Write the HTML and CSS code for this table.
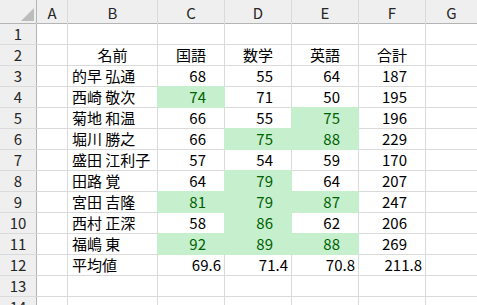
FILE: index.html
```html
<!DOCTYPE html>
<html lang="ja">
<head>
<meta charset="utf-8">
<title>Sheet</title>
<link rel="stylesheet" href="styles.css">
</head>
<body>
<div class="sheet">
  <div class="corner"><span class="tri"></span></div>
  <div class="ch">A</div><div class="ch">B</div><div class="ch">C</div><div class="ch">D</div><div class="ch">E</div><div class="ch">F</div><div class="ch">G</div>

  <div class="rh">1</div><div class="c"></div><div class="c"></div><div class="c"></div><div class="c"></div><div class="c"></div><div class="c"></div><div class="c"></div>

  <div class="rh">2</div><div class="c"></div><div class="c hd">名前</div><div class="c hd">国語</div><div class="c hd">数学</div><div class="c hd">英語</div><div class="c hd">合計</div><div class="c"></div>

  <div class="rh">3</div><div class="c"></div><div class="c name">的早 弘通</div><div class="c n">68</div><div class="c n">55</div><div class="c n">64</div><div class="c n">187</div><div class="c"></div>

  <div class="rh">4</div><div class="c"></div><div class="c name">西崎 敬次</div><div class="c n g">74</div><div class="c n">71</div><div class="c n">50</div><div class="c n">195</div><div class="c"></div>

  <div class="rh">5</div><div class="c"></div><div class="c name">菊地 和温</div><div class="c n">66</div><div class="c n">55</div><div class="c n g">75</div><div class="c n">196</div><div class="c"></div>

  <div class="rh">6</div><div class="c"></div><div class="c name">堀川 勝之</div><div class="c n">66</div><div class="c n g">75</div><div class="c n g">88</div><div class="c n">229</div><div class="c"></div>

  <div class="rh">7</div><div class="c"></div><div class="c name">盛田 江利子</div><div class="c n">57</div><div class="c n">54</div><div class="c n">59</div><div class="c n">170</div><div class="c"></div>

  <div class="rh">8</div><div class="c"></div><div class="c name">田路 覚</div><div class="c n">64</div><div class="c n g">79</div><div class="c n">64</div><div class="c n">207</div><div class="c"></div>

  <div class="rh">9</div><div class="c"></div><div class="c name">宮田 吉隆</div><div class="c n g">81</div><div class="c n g">79</div><div class="c n g">87</div><div class="c n">247</div><div class="c"></div>

  <div class="rh">10</div><div class="c"></div><div class="c name">西村 正深</div><div class="c n">58</div><div class="c n g">86</div><div class="c n">62</div><div class="c n">206</div><div class="c"></div>

  <div class="rh">11</div><div class="c"></div><div class="c name">福嶋 東</div><div class="c n g">92</div><div class="c n g">89</div><div class="c n g">88</div><div class="c n">269</div><div class="c"></div>

  <div class="rh">12</div><div class="c"></div><div class="c name">平均値</div><div class="c d">69.6</div><div class="c d">71.4</div><div class="c d">70.8</div><div class="c d">211.8</div><div class="c"></div>

  <div class="rh">13</div><div class="c"></div><div class="c"></div><div class="c"></div><div class="c"></div><div class="c"></div><div class="c"></div><div class="c"></div>

  <div class="rh">14</div><div class="c"></div><div class="c"></div><div class="c"></div><div class="c"></div><div class="c"></div><div class="c"></div><div class="c"></div>
</div>
</body>
</html>
```

FILE: styles.css
```css
html, body {
  margin: 0;
  padding: 0;
  background: #ffffff;
  overflow: hidden;
}

.sheet {
  display: grid;
  grid-template-columns: 36px 30px 89px 66px 66px 66px 66px 1fr;
  grid-template-rows: 23px repeat(14, 20px);
  gap: 1px;
  background: #dadada;
  font-family: "Noto Sans CJK JP", "Noto Sans", sans-serif;
  font-size: 15px;
  line-height: 20px;
  color: #000;
  width: 477px;
}

.corner {
  background: #efefef;
  display: flex;
  justify-content: flex-end;
  align-items: flex-end;
  padding: 0 2px 2px 0;
  box-shadow: 0 1px 0 #b4b4b4, 1px 0 0 #b4b4b4;
}

.tri {
  width: 0;
  height: 0;
  border-left: 13px solid transparent;
  border-bottom: 13px solid #bcbcbc;
}

.ch {
  background: #efefef;
  color: #262626;
  text-align: center;
  line-height: 23px;
  padding-top: 1px;
  box-shadow: 0 1px 0 #b4b4b4;
}

.rh {
  background: #efefef;
  color: #262626;
  text-align: center;
  box-shadow: 1px 0 0 #b4b4b4;
}

.c {
  background: #ffffff;
  white-space: nowrap;
  overflow: hidden;
}

.hd {
  text-align: center;
}

.name {
  padding-left: 4px;
}

.n {
  text-align: right;
  padding-right: 18px;
}

.d {
  text-align: right;
  padding-right: 3px;
}

.g {
  background: #c6efce;
  color: #006100;
  box-shadow: 0 0 0 1px #c6efce;
}
```
